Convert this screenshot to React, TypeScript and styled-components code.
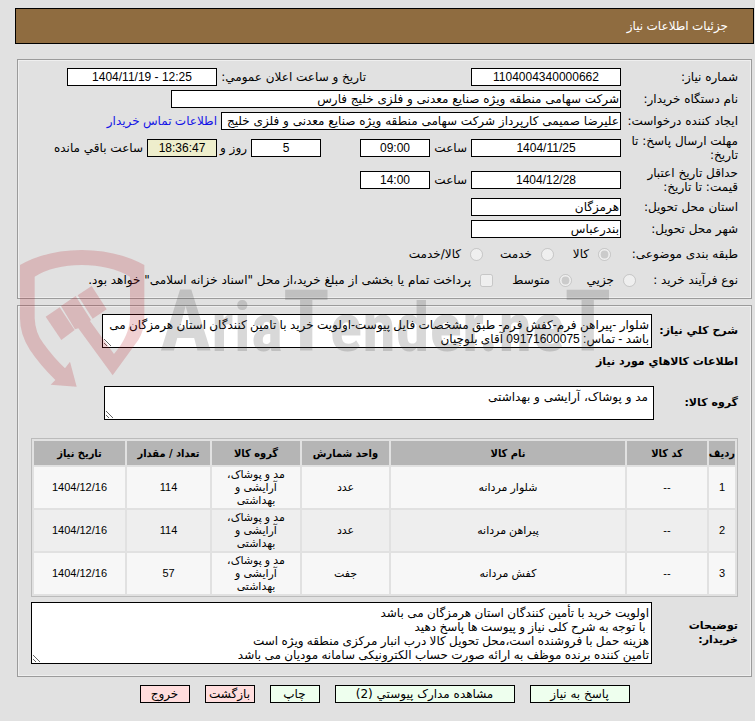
import React from 'react';
import styled, { createGlobalStyle } from 'styled-components';

const narrow = "'Liberation Sans', 'DejaVu Sans', sans-serif";
const wide = "'DejaVu Sans', sans-serif";

const GlobalStyle = createGlobalStyle`
  * { box-sizing: border-box; }
  body {
    margin: 0;
    background: #e1e1e1;
    color: #000;
    font-family: ${wide};
    font-size: 12px;
    line-height: 14px;
  }
`;

const Page = styled.div`
  position: relative;
  padding: 8px 1px 16px 15px;
`;

const TitleBar = styled.header`
  display: flex;
  align-items: center;
  height: 36px;
  padding: 0 25px;
  border: 1px solid #000;
  background: #8f6c40;
  color: #fff;
`;

const Title = styled.h1`
  margin: 0;
  font-family: ${narrow};
  font-size: 12px;
  font-weight: 400;
`;

const Panel = styled.fieldset<{ $gap: number }>`
  min-width: 0;
  margin: ${(p) => p.$gap}px 2px 0;
  padding: 6px 13px;
  border: 1px solid #9b9b9b;
  outline: 1px solid #efefef;
  outline-offset: -2px;
`;

const Row = styled.div<{ $height?: number }>`
  display: flex;
  align-items: center;
  height: ${(p) => p.$height ?? 22}px;
  white-space: nowrap;
`;

const Caption = styled.label<{ $width?: number }>`
  flex: none;
  width: ${(p) => p.$width ?? 117}px;
  white-space: normal;
`;

const Cell = styled.div<{ $width: number }>`
  display: flex;
  align-items: center;
  gap: 4px;
  flex: none;
  width: ${(p) => p.$width}px;
`;

const Field = styled.input<{ $width: number; $center?: boolean; $tint?: boolean }>`
  flex: none;
  width: ${(p) => p.$width}px;
  height: 18px;
  padding: 0 1px;
  border: 1px solid #000;
  border-radius: 0;
  background: ${(p) => (p.$tint ? '#eeeecc' : '#fff')};
  color: #000;
  font: inherit;
  font-family: ${(p) => (p.$center ? narrow : wide)};
  text-align: ${(p) => (p.$center ? 'center' : 'right')};
`;

const Word = styled.span<{ $width?: number }>`
  flex: none;
  width: ${(p) => (p.$width ? `${p.$width}px` : 'auto')};
`;

const ContactLink = styled.a`
  margin-right: 4px;
  color: #1414e6;
  font-family: ${narrow};
  text-decoration: none;
`;

const Choices = styled.div<{ $inset: number }>`
  display: flex;
  align-items: center;
  padding-right: ${(p) => p.$inset}px;
`;

const Choice = styled.label<{ $width?: number }>`
  display: flex;
  align-items: center;
  flex: none;
  gap: 9px;
  width: ${(p) => (p.$width ? `${p.$width}px` : 'auto')};
`;

const Mark = styled.input`
  flex: none;
  width: 13px;
  height: 13px;
  margin: 0;
`;

const Section = styled.div<{ $top: number }>`
  display: flex;
  align-items: center;
  margin-top: ${(p) => p.$top}px;
`;

const Strong = styled.label<{ $width: number }>`
  flex: none;
  width: ${(p) => p.$width}px;
  font-size: 11px;
  font-weight: 700;
`;

const Heading = styled.h2`
  margin: 7px 0 0;
  font-size: 11px;
  line-height: 14px;
`;

const Memo = styled.textarea<{ $height: number; $width?: number; $pad?: number; $wide?: boolean }>`
  display: block;
  flex: ${(p) => (p.$width ? 'none' : '1')};
  width: ${(p) => (p.$width ? `${p.$width}px` : 'auto')};
  height: ${(p) => p.$height}px;
  margin: 0;
  padding: 3px ${(p) => p.$pad ?? 2}px 0;
  border: 1px solid #000;
  border-radius: 0;
  background: #fff;
  color: #000;
  font: inherit;
  font-family: ${(p) => (p.$wide ? wide : narrow)};
  overflow: hidden;
`;

const Grid = styled.table`
  width: 100%;
  margin-top: 18px;
  border: 1px solid #bbb;
  border-spacing: 2px;
  table-layout: fixed;
  font-family: ${narrow};
  font-size: 11px;
  line-height: 13px;
  text-align: center;
`;

const Head = styled.th<{ $width?: number }>`
  width: ${(p) => (p.$width ? `${p.$width}px` : 'auto')};
  height: 24px;
  padding: 0;
  background: #b5b5b5;
  font-family: 'DejaVu Sans Condensed', 'DejaVu Sans', sans-serif;
  font-size: 11px;
  white-space: nowrap;
`;

const Item = styled.tr`
  background: #f7f7f7;
  &:nth-child(even) { background: #eee; }
`;

const Data = styled.td`
  height: 41px;
  padding: 1px 8px;
`;

const Actions = styled.div`
  display: flex;
  justify-content: center;
  gap: 15px;
  margin-top: 8px;
`;

const Action = styled.button<{ $width: number; $red?: boolean }>`
  width: ${(p) => p.$width}px;
  height: 18px;
  padding: 0;
  border: 1px solid #000;
  background: ${(p) => (p.$red ? '#ffdddd' : '#eeffee')};
  color: #000;
  font: inherit;
  white-space: nowrap;
`;

const Watermark = styled.svg`
  position: absolute;
  left: 15px;
  top: 245px;
  width: 600px;
  height: 150px;
  pointer-events: none;
`;

const goods = [
  ['1', '--', 'شلوار مردانه', 'عدد', 'مد و پوشاک، آرایشی و بهداشتی', '114', '1404/12/16'],
  ['2', '--', 'پیراهن مردانه', 'عدد', 'مد و پوشاک، آرایشی و بهداشتی', '114', '1404/12/16'],
  ['3', '--', 'کفش مردانه', 'جفت', 'مد و پوشاک، آرایشی و بهداشتی', '57', '1404/12/16'],
];

const columns: [string, number | undefined][] = [
  ['ردیف', 26],
  ['کد کالا', 80],
  ['نام کالا', undefined],
  ['واحد شمارش', 87],
  ['گروه کالا', 88],
  ['تعداد / مقدار', 83],
  ['تاریخ نیاز', 91],
];

const remarks = `اولویت خرید با تأمین کنندگان استان هرمزگان می باشد
 با توجه به شرح کلی نیاز و پیوست ها پاسخ دهید
هزینه حمل با فروشنده است،محل تحویل کالا درب انبار مرکزی منطقه ویژه است
تامین کننده برنده موظف به ارائه صورت حساب الکترونیکی سامانه مودیان می باشد`;

export default function App() {
  return (
    <Page dir="rtl">
      <GlobalStyle />
      <TitleBar>
        <Title>جزئیات اطلاعات نیاز</Title>
      </TitleBar>

      <Panel $gap={15}>
        <Row>
          <Caption htmlFor="number">شماره نیاز:</Caption>
          <Cell $width={255}>
            <Field id="number" $width={150} $center readOnly value="1104004340000662" />
          </Cell>
          <Caption htmlFor="announced" $width={149}>تاریخ و ساعت اعلان عمومي:</Caption>
          <Field id="announced" $width={150} $center readOnly dir="ltr" value="1404/11/19 - 12:25" />
        </Row>
        <Row>
          <Caption htmlFor="buyer">نام دستگاه خریدار:</Caption>
          <Field id="buyer" $width={450} readOnly value="شرکت سهامی منطقه ویژه صنایع معدنی و فلزی خلیج فارس" />
        </Row>
        <Row>
          <Caption htmlFor="creator">ایجاد کننده درخواست:</Caption>
          <Field
            id="creator"
            $width={400}
            readOnly
            value="علیرضا صمیمی کارپرداز شرکت سهامی منطقه ویژه صنایع معدنی و فلزی خلیج فارس"
          />
          <ContactLink href="#contact">اطلاعات تماس خریدار</ContactLink>
        </Row>
        <Row $height={32}>
          <Caption htmlFor="deadline">مهلت ارسال پاسخ: تا تاریخ:</Caption>
          <Cell $width={300}>
            <Field id="deadline" $width={150} $center readOnly value="1404/11/25" />
            <Word $width={33}>ساعت</Word>
            <Field aria-label="ساعت پاسخ" $width={70} $center readOnly value="09:00" />
          </Cell>
          <Cell $width={270}>
            <Field aria-label="روز" $width={70} $center readOnly value="5" />
            <Word $width={26}>روز و</Word>
            <Field aria-label="ساعت باقي مانده" $width={70} $center $tint readOnly value="18:36:47" />
            <Word>ساعت باقي مانده</Word>
          </Cell>
        </Row>
        <Row $height={32}>
          <Caption htmlFor="valid">حداقل تاریخ اعتبار قیمت: تا تاریخ:</Caption>
          <Cell $width={300}>
            <Field id="valid" $width={150} $center readOnly value="1404/12/28" />
            <Word $width={33}>ساعت</Word>
            <Field aria-label="ساعت اعتبار" $width={70} $center readOnly value="14:00" />
          </Cell>
        </Row>
        <Row>
          <Caption htmlFor="province">استان محل تحویل:</Caption>
          <Field id="province" $width={150} readOnly value="هرمزگان" />
        </Row>
        <Row>
          <Caption htmlFor="city">شهر محل تحویل:</Caption>
          <Field id="city" $width={150} readOnly value="بندرعباس" />
        </Row>
        <Row $height={28}>
          <Caption as="span">طبقه بندی موضوعی:</Caption>
          <Choices $inset={10}>
            <Choice $width={57}>
              <Mark type="radio" name="subject" disabled checked readOnly />
              کالا
            </Choice>
            <Choice $width={71}>
              <Mark type="radio" name="subject" disabled />
              خدمت
            </Choice>
            <Choice>
              <Mark type="radio" name="subject" disabled />
              کالا/خدمت
            </Choice>
          </Choices>
        </Row>
        <Row $height={24}>
          <Caption as="span" $width={102}>نوع فرآیند خرید :</Caption>
          <Choices $inset={0}>
            <Choice $width={64}>
              <Mark type="radio" name="process" disabled />
              جزیي
            </Choice>
            <Choice $width={79}>
              <Mark type="radio" name="process" disabled checked readOnly />
              متوسط
            </Choice>
            <Choice>
              <Mark type="checkbox" disabled />
              پرداخت تمام یا بخشی از مبلغ خرید،از محل "اسناد خزانه اسلامی" خواهد بود.
            </Choice>
          </Choices>
        </Row>
      </Panel>

      <Panel $gap={6}>
        <Section $top={2}>
          <Strong htmlFor="summary" $width={86}>شرح كلي نیاز:</Strong>
          <Memo
            id="summary"
            $width={550}
            $height={34}
            readOnly
            value="شلوار -پیراهن فرم-کفش فرم- طبق مشخصات فایل پیوست-اولویت خرید با تامین کنندگان استان هرمزگان می باشد - تماس: 09171600075 آقای بلوچیان"
          />
        </Section>
        <Heading>اطلاعات كالاهاي مورد نیاز</Heading>
        <Section $top={17}>
          <Strong htmlFor="group" $width={84}>گروه کالا:</Strong>
          <Memo id="group" $width={550} $height={34} $pad={5} $wide readOnly value="مد و پوشاک، آرایشی و بهداشتی" />
        </Section>
        <Grid>
          <thead>
            <tr>
              {columns.map(([name, width]) => (
                <Head key={name} $width={width}>{name}</Head>
              ))}
            </tr>
          </thead>
          <tbody>
            {goods.map((row) => (
              <Item key={row[0]}>
                {row.map((value, i) => (
                  <Data key={i}>{value}</Data>
                ))}
              </Item>
            ))}
          </tbody>
        </Grid>
        <Section $top={5}>
          <Strong htmlFor="remarks" $width={86}>
            توضیحات
            <br />
            خریدار:
          </Strong>
          <Memo id="remarks" $height={62} readOnly value={remarks} />
        </Section>
        <Section $top={6} />
      </Panel>

      <Actions>
        <Action type="button" $width={100}>پاسخ به نیاز</Action>
        <Action type="button" $width={180}>مشاهده مدارک پیوستي (2)</Action>
        <Action type="button" $width={50}>چاپ</Action>
        <Action type="button" $width={50} $red>بازگشت</Action>
        <Action type="button" $width={50} $red>خروج</Action>
      </Actions>

      <Watermark viewBox="15 245 600 150" direction="ltr" aria-hidden="true">
        <g fill="#b4141e" fillOpacity="0.2" transform="translate(10 240) scale(0.3333)">
          <path d="M30 75Q110 30 215 30T403 75V235Q402 275 385 300L308 406L205 265L195 268L153 198L197 168L243 240L240 243L312 342Q360 285 360 230V110Q300 75 215 75T74 110V235Q76 280 100 310Q130 352 165 385L180 365L200 440L122 434L136 420Q90 375 60 330Q30 285 30 235Z" />
          <path d="M107 230L149 202L194 270L154 300Z" />
          <path d="M203 166L245 138L290 208L248 236Z" />
        </g>
        <text
          x="160"
          y="351"
          fill="#3c3c3c"
          fillOpacity="0.2"
          fontFamily="'Roboto Condensed', Roboto, sans-serif"
          fontSize="68"
          fontWeight="700"
        >
          <tspan fontSize="86">A</tspan>ria<tspan fontSize="86">T</tspan>ender.ne<tspan fontSize="86">T</tspan>
        </text>
      </Watermark>
    </Page>
  );
}
